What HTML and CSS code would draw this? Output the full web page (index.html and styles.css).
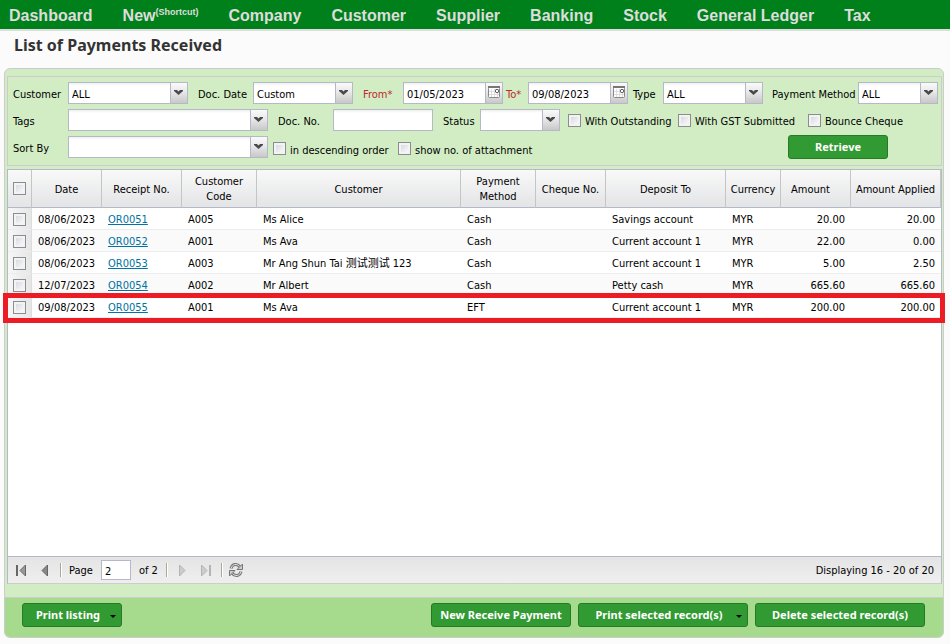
FILE: index.html
```html
<!DOCTYPE html>
<html lang="en">
<head>
<meta charset="utf-8">
<title>List of Payments Received</title>
<link rel="stylesheet" href="styles.css">
</head>
<body>
<svg class="defs" width="0" height="0" aria-hidden="true">
  <symbol id="arrow" viewBox="0 0 17 20">
    <rect x="1" width="16" height="20" fill="url(#trigger)"/>
    <path d="M0.5 0V20" stroke="#b5b8c8"/>
    <path d="M4 7h3l1.500 1.500L10 7h3v1l-4.500 4L4 8z" fill="#4a4a4a"/>
  </symbol>
  <symbol id="calendar" viewBox="0 0 17 20">
    <rect x="1" width="16" height="20" fill="url(#trigger)"/>
    <path d="M0.500 0V20" stroke="#b5b8c8"/>
    <rect x="3.500" y="4.500" width="11" height="10" rx="1" fill="#fff" stroke="#888"/>
    <path d="M3 4h12" stroke="#777" stroke-width="2"/>
    <path d="M6.500 6v8M9.500 6v8M12.500 10v4M4 8.500h6M4 11.500h10" stroke="#ddd"/>
    <rect x="10.500" y="6.500" width="3" height="3" rx="1" fill="#fff" stroke="#333"/>
  </symbol>
  <linearGradient id="trigger" x1="0" y1="0" x2="0" y2="1">
    <stop offset="0" stop-color="#fafafa"/><stop offset="0.450" stop-color="#e8e8e8"/><stop offset="1" stop-color="#c8c8c8"/>
  </linearGradient>
</svg>

<nav class="nav">
  <a href="#">Dashboard</a>
  <a href="#">New<sup>(Shortcut)</sup></a>
  <a href="#">Company</a>
  <a href="#">Customer</a>
  <a href="#">Supplier</a>
  <a href="#">Banking</a>
  <a href="#">Stock</a>
  <a href="#">General Ledger</a>
  <a href="#">Tax</a>
</nav>

<h1 class="title">List of Payments Received</h1>

<main class="panel">
  <form class="filters">
    <div class="row">
      <label class="label w55" for="customer">Customer</label>
      <span class="combo w120"><select id="customer"><option>ALL</option></select><svg class="trigger"><use href="#arrow"/></svg></span>
      <label class="label w65" for="docdate">Doc. Date</label>
      <span class="combo w100"><select id="docdate"><option>Custom</option></select><svg class="trigger"><use href="#arrow"/></svg></span>
      <label class="label w50 required" for="from">From*</label>
      <span class="combo w100"><input id="from" type="text" value="01/05/2023"><button class="pick" type="button" aria-label="Pick from date"><svg class="trigger"><use href="#calendar"/></svg></button></span>
      <label class="label w25 required" for="to">To*</label>
      <span class="combo w100"><input id="to" type="text" value="09/08/2023"><button class="pick" type="button" aria-label="Pick to date"><svg class="trigger"><use href="#calendar"/></svg></button></span>
      <label class="label w35" for="type">Type</label>
      <span class="combo w100"><select id="type"><option>ALL</option></select><svg class="trigger"><use href="#arrow"/></svg></span>
      <label class="label w95" for="method">Payment Method</label>
      <span class="combo w80"><select id="method"><option>ALL</option></select><svg class="trigger"><use href="#arrow"/></svg></span>
    </div>
    <div class="row">
      <label class="label w55" for="tags">Tags</label>
      <span class="combo w200"><select id="tags"><option></option></select><svg class="trigger"><use href="#arrow"/></svg></span>
      <label class="label w65" for="docno">Doc. No.</label>
      <span class="combo w100"><input id="docno" type="text"></span>
      <label class="label w47" for="status">Status</label>
      <span class="combo w80"><select id="status"><option></option></select><svg class="trigger"><use href="#arrow"/></svg></span>
      <label class="check w113"><input type="checkbox"><span>With Outstanding</span></label>
      <label class="check w130"><input type="checkbox"><span>With GST Submitted</span></label>
      <label class="check w130"><input type="checkbox"><span>Bounce Cheque</span></label>
    </div>
    <div class="row">
      <label class="label w55" for="sort">Sort By</label>
      <span class="combo w200"><select id="sort"><option></option></select><svg class="trigger"><use href="#arrow"/></svg></span>
      <label class="check low w125"><input type="checkbox"><span>in descending order</span></label>
      <label class="check low w395"><input type="checkbox"><span>show no. of attachment</span></label>
      <button class="button w100" type="button">Retrieve</button>
    </div>
  </form>

  <section class="grid">
    <table>
      <colgroup>
        <col class="w24"><col class="w70"><col class="w80"><col class="w75"><col><col class="w75"><col class="w70"><col class="w120"><col class="w55"><col class="w70"><col class="w90">
      </colgroup>
      <thead>
        <tr><th><input type="checkbox" aria-label="Select all"></th><th>Date</th><th>Receipt No.</th><th>Customer Code</th><th>Customer</th><th>Payment Method</th><th>Cheque No.</th><th>Deposit To</th><th>Currency</th><th class="amount">Amount</th><th>Amount Applied</th></tr>
      </thead>
      <tbody>
        <tr><td><input type="checkbox" aria-label="Select OR0051"></td><td>08/06/2023</td><td><a href="#">OR0051</a></td><td>A005</td><td>Ms Alice</td><td>Cash</td><td></td><td>Savings account</td><td>MYR</td><td>20.00</td><td>20.00</td></tr>
        <tr><td><input type="checkbox" aria-label="Select OR0052"></td><td>08/06/2023</td><td><a href="#">OR0052</a></td><td>A001</td><td>Ms Ava</td><td>Cash</td><td></td><td>Current account 1</td><td>MYR</td><td>22.00</td><td>0.00</td></tr>
        <tr><td><input type="checkbox" aria-label="Select OR0053"></td><td>08/06/2023</td><td><a href="#">OR0053</a></td><td>A003</td><td>Mr Ang Shun Tai 测试测试 123</td><td>Cash</td><td></td><td>Current account 1</td><td>MYR</td><td>5.00</td><td>2.50</td></tr>
        <tr><td><input type="checkbox" aria-label="Select OR0054"></td><td>12/07/2023</td><td><a href="#">OR0054</a></td><td>A002</td><td>Mr Albert</td><td>Cash</td><td></td><td>Petty cash</td><td>MYR</td><td>665.60</td><td>665.60</td></tr>
        <tr class="highlight"><td><input type="checkbox" aria-label="Select OR0055"></td><td>09/08/2023</td><td><a href="#">OR0055</a></td><td>A001</td><td>Ms Ava</td><td>EFT</td><td></td><td>Current account 1</td><td>MYR</td><td>200.00</td><td>200.00</td></tr>
      </tbody>
    </table>
    <div class="pager">
      <button type="button" aria-label="First page"><svg width="16" height="16"><path d="M4 3v11" stroke="#666" stroke-width="2"/><path d="M12.500 3v11L7 8.500z" fill="#999" stroke="#666"/></svg></button>
      <button type="button" aria-label="Previous page"><svg width="16" height="16"><path d="M10.500 3v11L5 8.500z" fill="#888" stroke="#666"/></svg></button>
      <span class="separator"></span>
      <label for="page">Page</label>
      <input id="page" type="text" value="2">
      <span class="of">of 2</span>
      <span class="separator"></span>
      <button type="button" disabled aria-label="Next page"><svg width="16" height="16"><path d="M5.500 3v11L11 8.500z" fill="#ccc" stroke="#b4b4b4"/></svg></button>
      <button type="button" disabled aria-label="Last page"><svg width="16" height="16"><path d="M3.500 3v11L9 8.500z" fill="#ccc" stroke="#b4b4b4"/><path d="M12 3v11" stroke="#b4b4b4" stroke-width="2"/></svg></button>
      <span class="separator"></span>
      <button type="button" aria-label="Refresh"><svg width="16" height="16" fill="none"><path d="M3 6.500C4 2 9 1 12 5" stroke="#777" stroke-width="3"/><path d="M3 6.500C4 2 9 1 12 5" stroke="#e4e4e4"/><path d="M13 9.500C12 14 7 15 4 11" stroke="#777" stroke-width="3"/><path d="M13 9.500C12 14 7 15 4 11" stroke="#e4e4e4"/><path d="M14.500 2v5.500H9zM1.500 14V8.500H7z" fill="#ccc" stroke="#777"/></svg></button>
      <span class="summary">Displaying 16 - 20 of 20</span>
    </div>
  </section>

  <footer class="actions">
    <button class="button menu w100" type="button">Print listing</button>
    <span class="group">
      <button class="button w140" type="button">New Receive Payment</button>
      <button class="button menu w170" type="button">Print selected record(s)</button>
      <button class="button w170" type="button">Delete selected record(s)</button>
    </span>
  </footer>
</main>
</body>
</html>
```
FILE: styles.css
```css
* { box-sizing: border-box; }

body {
  display: flex;
  flex-direction: column;
  min-height: 100vh;
  margin: 0;
  background: #fbfbfb;
  color: #000;
  font: 11px/15px "DejaVu Sans Condensed", "Noto Sans CJK SC", sans-serif;
}

input, select, button { font: inherit; color: inherit; }

.defs { position: absolute; }

.w24 { width: 24px; }
.w25 { width: 25px; }
.w35 { width: 35px; }
.w47 { width: 47px; }
.w50 { width: 50px; }
.w55 { width: 55px; }
.w65 { width: 65px; }
.w70 { width: 70px; }
.w75 { width: 75px; }
.w80 { width: 80px; }
.w90 { width: 90px; }
.w95 { width: 95px; }
.w100 { width: 100px; }
.w113 { width: 113px; }
.w120 { width: 120px; }
.w125 { width: 125px; }
.w130 { width: 130px; }
.w140 { width: 140px; }
.w170 { width: 170px; }
.w200 { width: 200px; }
.w395 { width: 395px; }

/* Navigation */
.nav {
  display: flex;
  gap: 30px;
  padding: 0 9px;
  border-bottom: 2px solid #ddd;
  background: #00801a;
}

.nav a {
  color: #ddd;
  font: bold 16px/29px "Liberation Sans", Arial, sans-serif;
  height: 29px;
  padding-top: 1px;
  text-decoration: none;
  white-space: nowrap;
}

.nav sup {
  font-size: 9px;
  line-height: 1px;
}

.title {
  margin: 0;
  padding: 4px 14px 12px;
  color: #333;
  font: bold 16px/21px "Noto Sans", sans-serif;
}

/* Panel */
.panel {
  display: flex;
  flex: 1;
  flex-direction: column;
  margin: 0 6px 6px 4px;
  padding-top: 7px;
  border: 1px solid #ccc;
  border-radius: 6px;
  background: #d2edc4;
}

.filters {
  display: flex;
  flex-direction: column;
  gap: 5px;
  margin: 0 1px 3px 2px;
  padding: 5px 5px 7px;
  border: 1px solid #ccc;
}

.row {
  display: flex;
  align-items: center;
  height: 22px;
}

.row > * { flex-shrink: 0; }

.label { white-space: nowrap; padding-top: 3px; }
.label.w65, .label.w50, .label.w47 { padding-left: 10px; }
.label.w95 { padding-left: 9px; }
.label.w35 { padding-left: 5px; }
.label.w25 { padding-left: 3px; }
.required { color: #c1272d; }

.combo {
  position: relative;
  display: flex;
  height: 22px;
  border: 1px solid #b5b8c8;
  background: linear-gradient(#f0f0f0, #fff 3px);
}

.combo input, .combo select {
  flex: 1;
  width: 0;
  height: 20px;
  margin: 0;
  padding: 3px 3px 0;
  border: 0;
  appearance: none;
  background: transparent;
}

.trigger {
  display: block;
  width: 17px;
  height: 20px;
}

.combo > .trigger {
  position: absolute;
  top: 0;
  right: 0;
  pointer-events: none;
}

.pick { padding: 0; border: 0; background: none; }

.check {
  display: flex;
  align-items: center;
  gap: 4px;
  padding-left: 5px;
  white-space: nowrap;
}

.check span { padding-top: 3px; }
.check.w113 { padding-left: 8px; }
.low { padding-top: 3px; }

input[type="checkbox"] {
  width: 13px;
  height: 13px;
  margin: 0;
  border: 1px solid #8b8d90;
  appearance: none;
  background: linear-gradient(135deg, #cfd3da, #fff);
  box-shadow: inset 0 0 0 2px #f3f3f3;
}

.button {
  position: relative;
  height: 24px;
  padding: 0 0 2px;
  border: 1px solid #267a26;
  border-radius: 3px;
  background: #329a32;
  color: #fff;
  font: bold 11px/15px "Noto Sans", sans-serif;
  white-space: nowrap;
}

.menu { padding-right: 8px; }

.menu::after {
  content: "";
  position: absolute;
  top: 11px;
  right: 5px;
  border: 3px solid transparent;
  border-top-color: #000;
  border-bottom: 0;
}

/* Grid */
.grid {
  display: flex;
  flex: 1;
  flex-direction: column;
  justify-content: space-between;
  margin: 0 1px 13px 2px;
  border: 1px solid #b5b8c8;
  border-bottom-color: #ccc;
  background: #fff;
}

table {
  width: 100%;
  border-collapse: separate;
  border-spacing: 0;
  table-layout: fixed;
}

th {
  height: 38px;
  padding: 1px 3px 0;
  border-right: 1px solid #c5c5c5;
  border-bottom: 1px solid #b5b8c8;
  background: linear-gradient(#f9f9f9, #e3e4e6);
  font-weight: normal;
}

.amount { padding-right: 13px; }

td {
  height: 22px;
  padding: 2px 6px 0;
  border-bottom: 1px solid #ededed;
  white-space: nowrap;
}

tbody tr:nth-child(even) { background: #fafafa; }
td:nth-child(n+10) { text-align: right; }

th:first-child, td:first-child { padding: 0 5px; }
td:first-child { padding-top: 1px; }

td:first-child {
  border-right: 1px solid #ddd;
  background: linear-gradient(90deg, #f7f7f7, #e6e6e6);
}

th input, td input { display: block; }
td a { color: #0072a3; }

.highlight { position: relative; }

.highlight td:first-child::after {
  content: "";
  position: absolute;
  top: -3px;
  right: -4px;
  bottom: -5px;
  left: -5px;
  border: 5px solid #ed1c24;
  pointer-events: none;
}

/* Pager */
.pager {
  display: flex;
  align-items: center;
  gap: 8px;
  height: 27px;
  padding: 0 7px 0 5px;
  border-top: 1px solid #b5b8c8;
  background: linear-gradient(#e4e4e4, #efefef);
}

.pager button {
  height: 16px;
  padding: 0;
  border: 0;
  background: none;
}

.pager svg { display: block; }

.separator {
  width: 2px;
  height: 14px;
  border-left: 1px solid #aca899;
  border-right: 1px solid #fff;
}

.pager button + .separator { margin: 0 -1px; }
.pager .separator + button { margin-left: -2px; }

.pager input {
  width: 30px;
  height: 20px;
  padding: 2px 3px 0;
  border: 1px solid #b5b8c8;
  background: #fff;
}

.summary { margin-left: auto; }

/* Footer actions */
.actions {
  display: flex;
  justify-content: space-between;
  padding: 5px 18px 10px 17px;
  border-top: 1px solid #ccc;
  border-radius: 0 0 5px 5px;
  background: #a6da8c;
}

.group { display: flex; gap: 7px; }
```
